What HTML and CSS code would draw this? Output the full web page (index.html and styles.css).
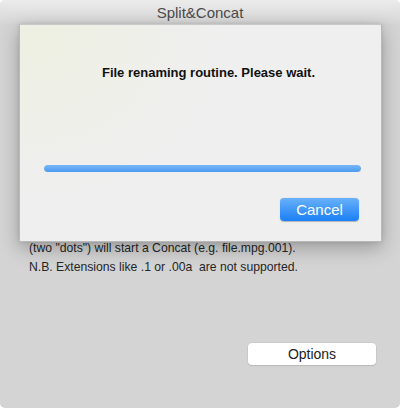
FILE: index.html
```html
<!DOCTYPE html>
<html>
<head>
<meta charset="utf-8">
<link rel="stylesheet" href="styles.css">
</head>
<body>
<div class="window">
  <div class="titlebar">Split&amp;Concat</div>
  <div class="content">
    <div class="info">
      <p>Drop a file here to split it into segments.</p>
      <p>Dropping a file with a numeric extension</p>
      <p>such as .001 or .01 following a regular one</p>
      <p>(two "dots") will start a Concat (e.g. file.mpg.001).</p>
      <p>N.B. Extensions like .1 or .00a&nbsp; are not supported.</p>
    </div>
    <div class="actions">
      <button class="btn-options">Options</button>
    </div>
  </div>
  <div class="sheet">
    <div class="sheet-msg">File renaming routine. Please wait.</div>
    <div class="progress"><div class="progress-fill" style="width:100%"></div></div>
    <div class="sheet-actions">
      <button class="btn-cancel">Cancel</button>
    </div>
  </div>
</div>
</body>
</html>
```
FILE: styles.css
```css
html, body {
  margin: 0;
  padding: 0;
  background: #ffffff;
}
body {
  width: 400px;
  height: 408px;
  overflow: hidden;
  font-family: "Liberation Sans", Arial, sans-serif;
}
.window {
  position: relative;
  width: 400px;
  height: 408px;
  background: #d4d4d4;
  border-radius: 5px;
  overflow: hidden;
  display: flex;
  flex-direction: column;
}
.titlebar {
  height: 24px;
  flex: none;
  box-sizing: border-box;
  background: linear-gradient(#ececec, #d6d6d6);
  color: #4b4b4b;
  font-size: 15px;
  text-align: center;
  line-height: 25px;
}
.content {
  flex: 1;
  display: flex;
  flex-direction: column;
  padding: 0 24px 0 29px;
}
.info {
  margin-top: 158px;
  color: #262626;
  font-size: 12.2px;
  line-height: 19px;
}
.info p {
  margin: 0;
}
.actions {
  display: flex;
  justify-content: flex-end;
  margin-top: 66px;
}
.btn-options {
  width: 128px;
  height: 22px;
  border: none;
  border-radius: 4px;
  background: #ffffff;
  box-shadow: 0 0 0 0.5px #c0c0c0, 0 1px 1px #b4b4b4;
  font-family: "Liberation Sans", Arial, sans-serif;
  font-size: 14px;
  color: #222;
  padding: 0;
  line-height: 22px;
}
.sheet {
  position: absolute;
  left: 19px;
  top: 24px;
  width: 363px;
  height: 218px;
  box-sizing: border-box;
  border: 1px solid #b9b9b9;
  border-top-color: #c8c8c8;
  background: radial-gradient(ellipse 180px 160px at 20px 10px, #eef0e2, rgba(239,239,239,0) 100%), #efefef;
  box-shadow: 0 6px 18px rgba(0,0,0,0.28), 0 0 4px rgba(0,0,0,0.1);
  display: flex;
  flex-direction: column;
  padding: 0 20px 0 24px;
}
.sheet-msg {
  margin-top: 40px;
  font-weight: bold;
  font-size: 13px;
  color: #111;
  text-align: center;
  padding-left: 12px;
  line-height: 16px;
}
.progress {
  margin-top: 84px;
  height: 7px;
  border-radius: 4px;
  background: #d8d8d8;
  overflow: hidden;
}
.progress-fill {
  height: 100%;
  border-radius: 4px;
  background: linear-gradient(#78b6f7, #4b9bf3);
}
.sheet-actions {
  display: flex;
  justify-content: flex-end;
  margin-top: 26px;
  padding-right: 2px;
}
.btn-cancel {
  width: 79px;
  height: 23px;
  border: none;
  border-radius: 4px;
  background: linear-gradient(#69b1fa, #1a7ff6);
  box-shadow: 0 0.5px 1px rgba(0,0,0,0.25);
  color: #ffffff;
  font-family: "Liberation Sans", Arial, sans-serif;
  font-size: 15px;
  padding: 0;
  line-height: 23px;
}
```
